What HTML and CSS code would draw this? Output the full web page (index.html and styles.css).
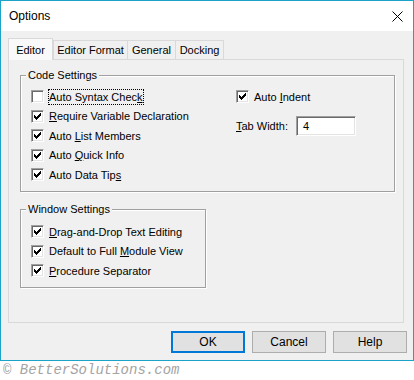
FILE: index.html
```html
<!DOCTYPE html>
<html>
<head>
<meta charset="utf-8">
<link rel="stylesheet" href="styles.css">
</head>
<body>
<div class="window">
  <div class="titlebar">
    <span class="title">Options</span>
    <svg class="close" width="11" height="11" viewBox="0 0 11 11"><path d="M0.5 0.5L10.5 10.5M10.5 0.5L0.5 10.5" stroke="#000" stroke-width="1" fill="none"/></svg>
  </div>
  <div class="client">
    <div class="tabs">
      <div class="tab active tab-editor">Editor</div>
      <div class="tab tab-format">Editor Format</div>
      <div class="tab tab-general">General</div>
      <div class="tab tab-docking">Docking</div>
    </div>
    <div class="panel">
      <div class="group code">
        <div class="legend">Code Settings</div>
        <div class="code-body">
          <div class="col">
            <div class="row"><span class="cb"></span><span class="focus">Auto Syntax Chec<u>k</u></span></div>
            <div class="row"><span class="cb"><svg width="7" height="7" viewBox="0 0 7 7"><path d="M0 2h1v3H0zM1 3h1v3H1zM2 4h1v3H2zM3 3h1v3H3zM4 2h1v3H4zM5 1h1v3H5zM6 0h1v3H6z"/></svg></span><span><u>R</u>equire Variable Declaration</span></div>
            <div class="row"><span class="cb"><svg width="7" height="7" viewBox="0 0 7 7"><path d="M0 2h1v3H0zM1 3h1v3H1zM2 4h1v3H2zM3 3h1v3H3zM4 2h1v3H4zM5 1h1v3H5zM6 0h1v3H6z"/></svg></span><span>Auto <u>L</u>ist Members</span></div>
            <div class="row"><span class="cb"><svg width="7" height="7" viewBox="0 0 7 7"><path d="M0 2h1v3H0zM1 3h1v3H1zM2 4h1v3H2zM3 3h1v3H3zM4 2h1v3H4zM5 1h1v3H5zM6 0h1v3H6z"/></svg></span><span>Auto <u>Q</u>uick Info</span></div>
            <div class="row"><span class="cb"><svg width="7" height="7" viewBox="0 0 7 7"><path d="M0 2h1v3H0zM1 3h1v3H1zM2 4h1v3H2zM3 3h1v3H3zM4 2h1v3H4zM5 1h1v3H5zM6 0h1v3H6z"/></svg></span><span>Auto Data Tip<u>s</u></span></div>
          </div>
          <div class="col">
            <div class="row"><span class="cb"><svg width="7" height="7" viewBox="0 0 7 7"><path d="M0 2h1v3H0zM1 3h1v3H1zM2 4h1v3H2zM3 3h1v3H3zM4 2h1v3H4zM5 1h1v3H5zM6 0h1v3H6z"/></svg></span><span>Auto <u>I</u>ndent</span></div>
            <div class="tabwidth"><span class="tw-label"><u>T</u>ab Width:</span><span class="input">4</span></div>
          </div>
        </div>
      </div>
      <div class="group win">
        <div class="legend">Window Settings</div>
        <div class="win-body">
          <div class="row"><span class="cb"><svg width="7" height="7" viewBox="0 0 7 7"><path d="M0 2h1v3H0zM1 3h1v3H1zM2 4h1v3H2zM3 3h1v3H3zM4 2h1v3H4zM5 1h1v3H5zM6 0h1v3H6z"/></svg></span><span><u>D</u>rag-and-Drop Text Editing</span></div>
          <div class="row"><span class="cb"><svg width="7" height="7" viewBox="0 0 7 7"><path d="M0 2h1v3H0zM1 3h1v3H1zM2 4h1v3H2zM3 3h1v3H3zM4 2h1v3H4zM5 1h1v3H5zM6 0h1v3H6z"/></svg></span><span>Default to Full <u>M</u>odule View</span></div>
          <div class="row"><span class="cb"><svg width="7" height="7" viewBox="0 0 7 7"><path d="M0 2h1v3H0zM1 3h1v3H1zM2 4h1v3H2zM3 3h1v3H3zM4 2h1v3H4zM5 1h1v3H5zM6 0h1v3H6z"/></svg></span><span><u>P</u>rocedure Separator</span></div>
        </div>
      </div>
    </div>
    <div class="buttons">
      <div class="btn default">OK</div>
      <div class="btn">Cancel</div>
      <div class="btn">Help</div>
    </div>
  </div>
</div>
<div class="watermark">© BetterSolutions.com</div>
</body>
</html>
```
FILE: styles.css
```css
body {
  margin: 0;
  background: #fff;
  font-family: "Liberation Sans", Arial, sans-serif;
  font-size: 11px;
  color: #000;
}
.window {
  width: 414px;
  height: 361px;
  box-sizing: border-box;
  border: 1px solid #1ba4c8;
  display: flex;
  flex-direction: column;
}
.titlebar {
  height: 30px;
  flex: none;
  background: #fff;
  display: flex;
  align-items: center;
  padding-left: 8px;
}
.title {
  font-size: 12px;
}
.close {
  margin-left: auto;
  margin-right: 10px;
}
.client {
  flex: 1;
  background: #f0f0f0;
  padding: 7px 0 7px 7px;
  display: flex;
  flex-direction: column;
}
.tabs {
  display: flex;
  align-items: flex-end;
  height: 21px;
  flex: none;
}
.tab {
  box-sizing: border-box;
  height: 19px;
  border: 1px solid #d9d9d9;
  border-bottom: none;
  display: flex;
  align-items: center;
  justify-content: center;
  background: #f0f0f0;
  white-space: nowrap;
}
.tab.active {
  height: 22px;
  margin-bottom: -1px;
  background: #f9f9f9;
  position: relative;
  z-index: 1;
}
.tab-editor { width: 45px; }
.tab-format { width: 75px; }
.tab-general { width: 49px; margin-left: -1px; }
.tab-docking { width: 49px; margin-left: -1px; }
.panel {
  height: 264px;
  flex: none;
  box-sizing: border-box;
  border: 1px solid #d9d9d9;
  margin-right: 9px;
  display: flex;
  flex-direction: column;
  align-items: flex-start;
}
.group {
  box-sizing: border-box;
  border: 1px solid #a0a0a0;
  box-shadow: inset 1px 1px 0 #fff, 1px 1px 0 #fff;
  margin-left: 11px;
}
.group.code {
  margin-top: 15px;
  width: 375px;
}
.group.win {
  margin-top: 17px;
  width: 186px;
}
.legend {
  width: fit-content;
  margin: -8px 0 0 5px;
  padding: 0 2px;
  line-height: 14px;
  background: #f0f0f0;
  white-space: nowrap;
}
.code-body {
  display: grid;
  grid-template-columns: 205px 1fr;
  padding: 5px 0 6.5px 10px;
}
.win-body {
  padding: 6px 0 6.5px 10px;
}
.row {
  height: 19.5px;
  display: flex;
  align-items: center;
  gap: 5px;
  white-space: nowrap;
}
.cb {
  width: 13px;
  height: 13px;
  flex: none;
  box-sizing: border-box;
  border: 1px solid;
  border-color: #a0a0a0 #fff #fff #a0a0a0;
  background: #fff;
  box-shadow: inset 1px 1px 0 #696969, inset -1px -1px 0 #e3e3e3;
  display: flex;
  align-items: center;
  justify-content: center;
}
.cb svg {
  display: block;
  fill: #000;
}
.focus {
  line-height: 14px;
  outline: 1px dotted #000;
}
.tabwidth {
  display: flex;
  align-items: center;
  margin-top: 9px;
  height: 20px;
  white-space: nowrap;
}
.tw-label {
  width: 60px;
}
.input {
  width: 60px;
  height: 20px;
  box-sizing: border-box;
  border: 1px solid;
  border-color: #a0a0a0 #fff #fff #a0a0a0;
  box-shadow: inset 1px 1px 0 #696969, inset -1px -1px 0 #e3e3e3;
  background: #fff;
  padding-left: 6px;
  display: flex;
  align-items: center;
}
.buttons {
  display: flex;
  justify-content: flex-end;
  gap: 7px;
  margin-top: 8px;
  padding-right: 6px;
}
.btn {
  width: 74px;
  height: 22px;
  box-sizing: border-box;
  border: 1px solid #adadad;
  background: #e1e1e1;
  display: flex;
  align-items: center;
  justify-content: center;
  font-size: 12px;
}
.btn.default {
  border: 2px solid #0078d7;
}
.watermark {
  height: 19px;
  line-height: 19px;
  padding-left: 3px;
  font-family: "Liberation Mono", monospace;
  font-style: italic;
  font-size: 14px;
  color: #a4a4a4;
  white-space: nowrap;
}
```
